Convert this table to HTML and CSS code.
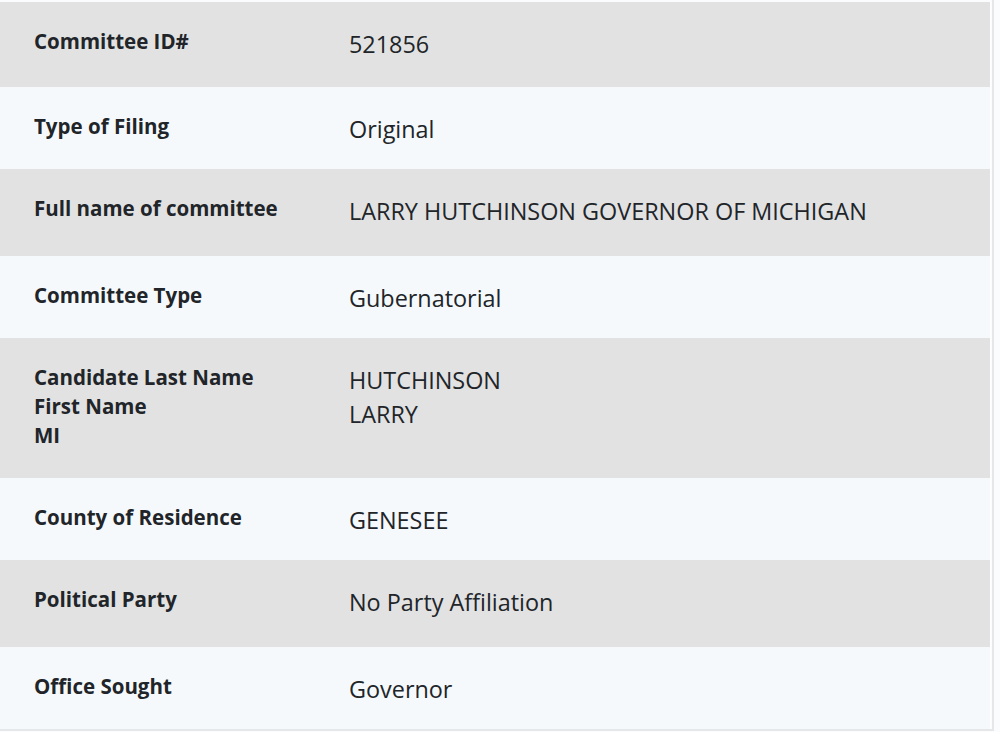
FILE: index.html
```html
<!DOCTYPE html>
<html lang="en">
<head>
<meta charset="utf-8">
<title>Committee Details</title>
<link rel="stylesheet" href="styles.css">
</head>
<body>
<div class="panel">
  <div class="details">
    <div class="row shade first">
      <div class="label">Committee ID#</div>
      <div class="value">521856</div>
    </div>
    <div class="row">
      <div class="label">Type of Filing</div>
      <div class="value">Original</div>
    </div>
    <div class="row shade">
      <div class="label">Full name of committee</div>
      <div class="value">LARRY HUTCHINSON GOVERNOR OF MICHIGAN</div>
    </div>
    <div class="row">
      <div class="label">Committee Type</div>
      <div class="value">Gubernatorial</div>
    </div>
    <div class="row shade">
      <div class="label">Candidate Last Name<br>First Name<br>MI</div>
      <div class="value">HUTCHINSON<br>LARRY</div>
    </div>
    <div class="row">
      <div class="label">County of Residence</div>
      <div class="value">GENESEE</div>
    </div>
    <div class="row shade">
      <div class="label">Political Party</div>
      <div class="value">No Party Affiliation</div>
    </div>
    <div class="row">
      <div class="label">Office Sought</div>
      <div class="value">Governor</div>
    </div>
  </div>
</div>
</body>
</html>
```

FILE: styles.css
```css
html, body {
  margin: 0;
  padding: 0;
  background: #fbfcfd;
}

body {
  font-family: "Open Sans", "Liberation Sans", sans-serif;
  color: #212529;
}

.panel {
  width: 992px;
  padding-top: 2px;
  border-right: 2px solid #e6e7e8;
  border-bottom: 2px solid #e6e7e8;
  background: #fbfcfd;
}

.details {
  width: 990px;
  border-right: 1px solid #ffffff;
}

.row {
  display: grid;
  grid-template-columns: 349px 1fr;
  padding: 25px 0 23px;
  background: #f6f9fc;
}

.row.shade {
  padding-bottom: 28px;
  background: #e2e2e2;
}

.row.first {
  padding-bottom: 26px;
}

.label {
  padding-left: 34px;
  font-size: 20.5px;
  font-weight: 700;
  line-height: 29px;
}

.value {
  font-size: 23.4px;
  font-weight: 400;
  line-height: 34px;
}
```
